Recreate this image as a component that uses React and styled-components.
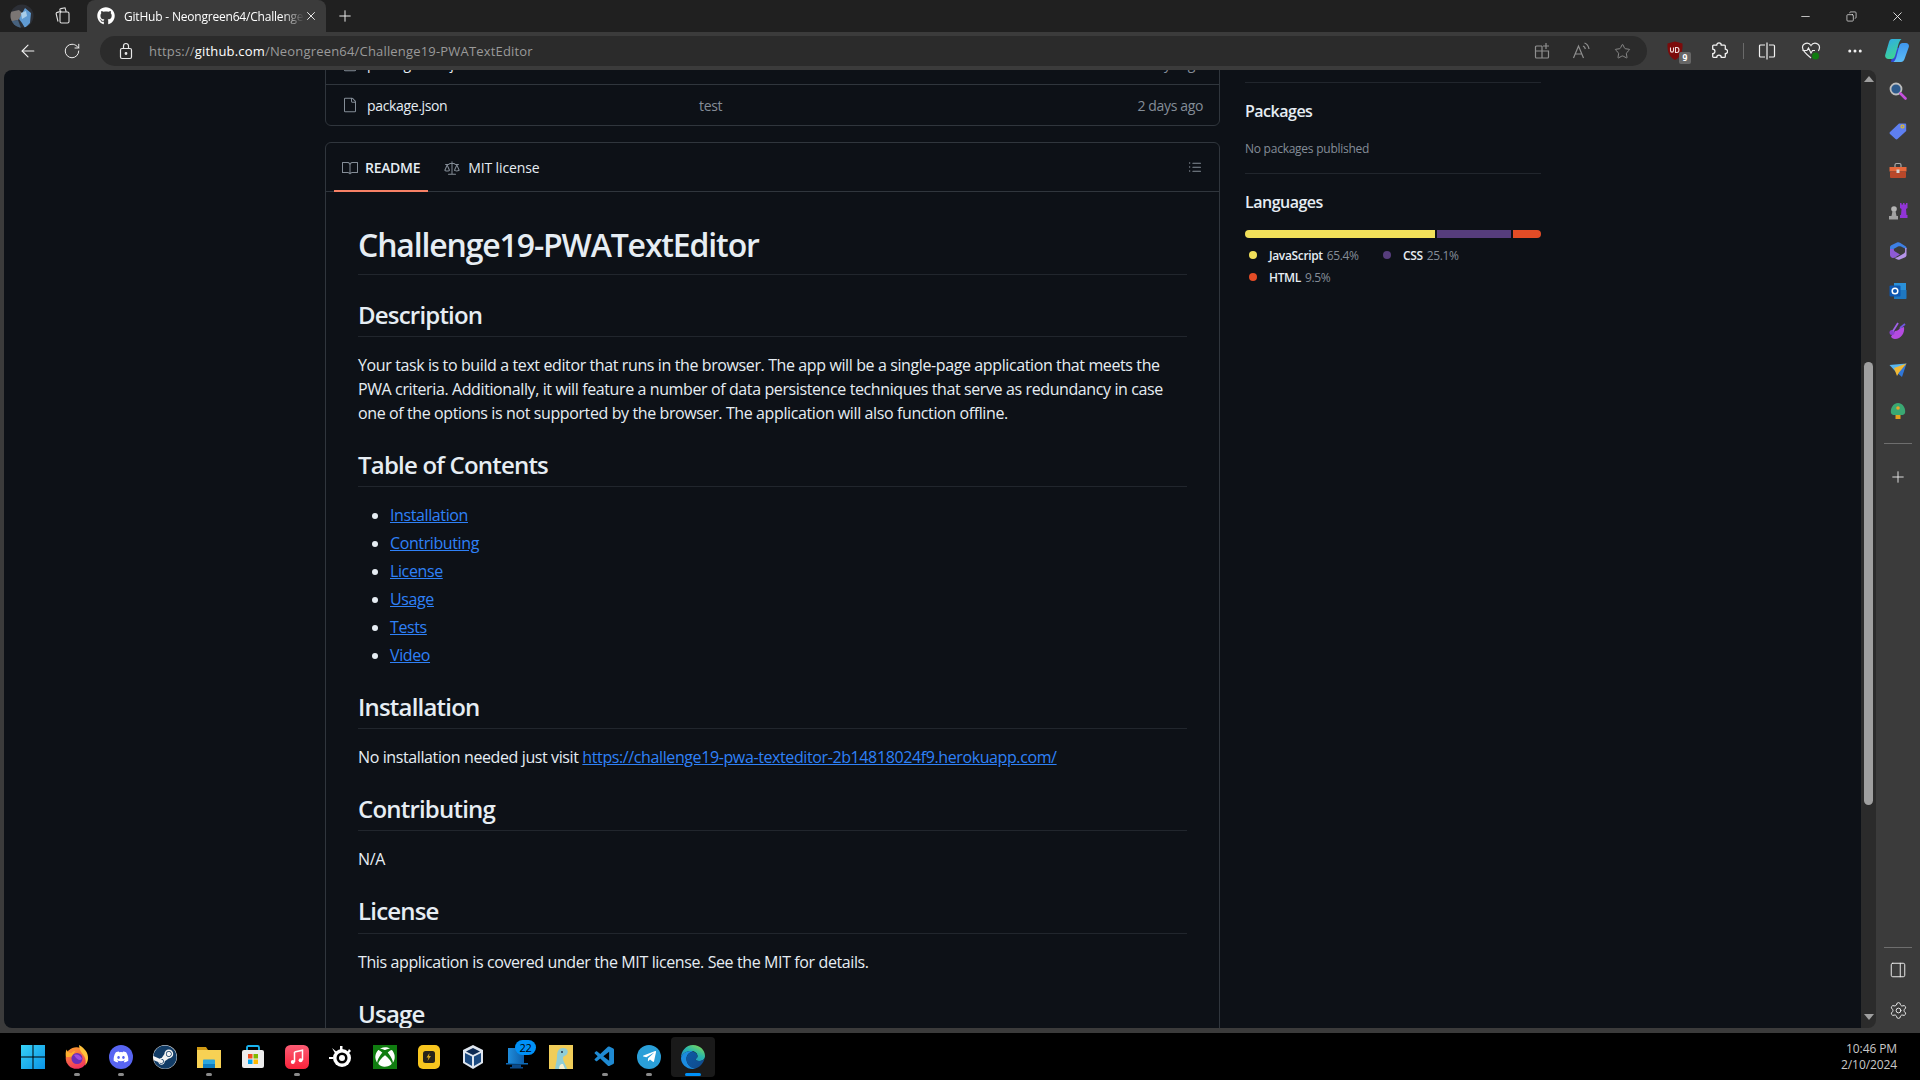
import React from "react";
import styled, { createGlobalStyle } from "styled-components";
import { ArrowLeft, RotateCw, Plus, X, Minus, Star, Ellipsis, Settings, PanelRight, Copy } from "lucide-react";
import { FaGithub, FaDiscord, FaSteam, FaTelegramPlane, FaXbox } from "react-icons/fa";
import { GoFile, GoBook, GoLaw, GoListUnordered } from "react-icons/go";
import { VscVscode } from "react-icons/vsc";

const GlobalStyle = createGlobalStyle`
  html, body { margin: 0; padding: 0; background: #000; }
  body { width: 1920px; height: 1080px; overflow: hidden; font-family: "Open Sans", "Noto Sans", sans-serif; }
  * { box-sizing: border-box; }
`;

const Shell = styled.div`
  width: 1920px;
  height: 1080px;
  display: flex;
  flex-direction: column;
  background: #000;
`;

/* browser chrome */
const TabStrip = styled.div`
  height: 32px;
  flex: none;
  display: flex;
  align-items: stretch;
  padding-left: 2px;
  background: #202020;
`;
const StripSlot = styled.div`
  width: ${p => p.$w || 40}px;
  display: flex;
  align-items: center;
  justify-content: center;
  color: #f0f0f0;
`;
const ActiveTab = styled.div`
  width: 239px;
  margin-left: 5px;
  display: flex;
  align-items: center;
  padding: 0 8px 0 10px;
  background: #3b3b3b;
  border-radius: 8px 8px 0 0;
  color: #fff;
`;
const TabTitle = styled.span`
  flex: 1;
  margin-left: 9px;
  font-size: 12px;
  letter-spacing: -0.2px;
  white-space: nowrap;
  overflow: hidden;
  -webkit-mask-image: linear-gradient(90deg, #000 88%, transparent);
  mask-image: linear-gradient(90deg, #000 88%, transparent);
`;
const WindowControls = styled.div`
  margin-left: auto;
  display: flex;
`;
const Toolbar = styled.div`
  height: 38px;
  flex: none;
  display: flex;
  align-items: center;
  padding-left: 6px;
  background: #3b3b3b;
`;
const ToolSlot = styled.div`
  position: relative;
  width: ${p => p.$w || 44}px;
  height: 30px;
  display: flex;
  align-items: center;
  justify-content: center;
  color: ${p => p.$muted ? "#8f8f8f" : "#f2f2f2"};
`;
const AddressBar = styled.div`
  width: 1547px;
  height: 30px;
  margin: 0 6px;
  display: flex;
  align-items: center;
  padding: 0 5px 0 18px;
  border-radius: 15px;
  background: #2b2b2b;
  color: #e8e8e8;
`;
const Url = styled.div`
  flex: 1;
  margin-left: 15px;
  font-size: 13px;
  letter-spacing: 0.18px;
  color: #9a9a9a;
  b { font-weight: 400; color: #fff; }
`;
const ToolDivider = styled.div`
  width: 1px;
  height: 16px;
  margin: 0 1px 0 2px;
  background: #6a6a6a;
`;
const CountBadge = styled.span`
  position: absolute;
  left: 26px;
  top: 16px;
  width: 12px;
  height: 12px;
  border-radius: 2px;
  background: #666;
  color: #fff;
  font: 700 9px/12px "DejaVu Sans Mono", monospace;
  text-align: center;
`;

/* middle row */
const Middle = styled.div`
  flex: 1;
  min-height: 0;
  display: flex;
  background: #3b3b3b;
  padding-bottom: 5px;
`;
const Page = styled.main`
  width: 1857px;
  margin-left: 4px;
  border-radius: 8px 0 0 8px;
  overflow: hidden;
  background: #0d1117;
  color: #e6edf3;
  display: grid;
  grid-template-columns: 895px 296px;
  column-gap: 25px;
  padding-left: 321px;
  align-content: start;
`;
const Scrollbar = styled.div`
  width: 15px;
  display: flex;
  flex-direction: column;
  align-items: center;
  background: #2b2b2b;
  border-radius: 0 8px 8px 0;
`;
const ScrollArrow = styled.div`
  width: 0;
  height: 0;
  margin: ${p => p.$down ? "auto 0 8px" : "6px 0 0"};
  border-left: 5px solid transparent;
  border-right: 5px solid transparent;
  ${p => p.$down ? "border-top: 6px solid #9f9f9f;" : "border-bottom: 6px solid #9f9f9f;"}
`;
const ScrollThumb = styled.div`
  width: 9px;
  height: 443px;
  margin-top: 280px;
  border-radius: 5px;
  background: #9f9f9f;
`;
const Rail = styled.aside`
  width: 44px;
  margin-bottom: -2px;
  display: flex;
  flex-direction: column;
  align-items: center;
  padding-top: 1px;
  color: #eee;
`;
const RailSlot = styled.div`
  width: 44px;
  height: 40px;
  flex: none;
  display: flex;
  align-items: center;
  justify-content: center;
`;
const RailLine = styled.div`
  width: 28px;
  height: 1px;
  flex: none;
  margin: ${p => p.$bottom ? "auto 0 2px" : "12px 0 13px"};
  background: #6e6e6e;
`;

/* github page */
const RepoColumn = styled.div`
  min-width: 0;
`;
const FileBox = styled.div`
  margin-top: -28px;
  border: 1px solid #30363d;
  border-radius: 6px;
`;
const FileRow = styled.div`
  height: 41px;
  display: grid;
  grid-template-columns: 357px 1fr auto;
  align-items: center;
  padding: 0 16px;
  font-size: 14px;
  letter-spacing: -0.35px;
  & + & { border-top: 1px solid #30363d; }
`;
const FileName = styled.div`
  display: flex;
  align-items: center;
  gap: 9px;
  svg { color: #848d97; }
`;
const Muted = styled.div`
  color: #848d97;
`;
const ReadmeBox = styled.section`
  margin-top: 16px;
  border: 1px solid #30363d;
  border-radius: 6px 6px 0 0;
`;
const ReadmeHead = styled.div`
  height: 49px;
  display: flex;
  align-items: stretch;
  padding: 0 16px 0 8px;
  border-bottom: 1px solid #30363d;
`;
const ReadmeTab = styled.div`
  display: flex;
  align-items: center;
  gap: ${p => p.$active ? 7 : 8}px;
  margin-bottom: -1px;
  padding: 2px 8px 0;
  margin-right: 8px;
  font-size: 14px;
  letter-spacing: ${p => p.$active ? -0.3 : -0.12}px;
  font-weight: ${p => p.$active ? 600 : 400};
  border-bottom: 2px solid ${p => p.$active ? "#f78166" : "transparent"};
  svg { color: #848d97; }
`;
const OutlineButton = styled.div`
  margin-left: auto;
  display: flex;
  align-items: center;
  color: #848d97;
`;
const Markdown = styled.article`
  padding: 32px 32px 0;
  height: 900px;
  font-size: 16px;
  line-height: 24px;
  letter-spacing: -0.39px;
`;
const H1 = styled.h1`
  margin: 0 0 16px;
  padding: 1px 0 8.6px;
  font-size: 32px;
  line-height: 40px;
  font-weight: 600;
  letter-spacing: -1.15px;
  border-bottom: 1px solid #21262d;
`;
const H2 = styled.h2`
  margin: 24px 0 16px;
  padding: 1px 0 6.2px;
  font-size: 24px;
  line-height: 30px;
  font-weight: 600;
  letter-spacing: -0.8px;
  border-bottom: 1px solid #21262d;
`;
const Para = styled.p`
  margin: 0 0 16px;
`;
const Toc = styled.ul`
  margin: 0 0 16px;
  padding-left: 32px;
  li + li { margin-top: 4px; }
`;
const A = styled.a`
  color: #2f81f7;
  text-decoration: underline;
`;

/* right column */
const SideColumn = styled.div`
  padding-top: 12px;
`;
const SideSection = styled.div`
  border-top: 1px solid #21262d;
  padding: 16px 0 0;
  height: ${p => p.$h ? `${p.$h}px` : "auto"};
`;
const SideTitle = styled.h2`
  margin: 0;
  font-size: 16px;
  line-height: 24px;
  font-weight: 600;
  letter-spacing: -0.5px;
`;
const SideNote = styled.div`
  margin-top: 17px;
  font-size: 12px;
  line-height: 18px;
  letter-spacing: -0.25px;
  color: #848d97;
`;
const LangBar = styled.div`
  display: flex;
  gap: 2px;
  height: 8px;
  margin-top: 16px;
  border-radius: 6px;
  overflow: hidden;
`;
const LangSegment = styled.span`
  background: ${p => p.$color};
`;
const LangList = styled.div`
  display: grid;
  grid-template-columns: 134px auto;
  justify-content: start;
  row-gap: 4px;
  margin-top: 8px;
  padding-left: 4px;
`;
const LangItem = styled.div`
  display: flex;
  align-items: center;
  height: 18px;
  font-size: 12px;
  letter-spacing: -0.35px;
  color: #848d97;
  b { font-weight: 600; color: #e6edf3; margin: 0 4px 0 12px; }
`;
const LangDot = styled.span`
  width: 8px;
  height: 8px;
  border-radius: 50%;
  background: ${p => p.$color};
`;

/* taskbar */
const Taskbar = styled.footer`
  height: 47px;
  flex: none;
  display: flex;
  align-items: center;
  padding-left: 11px;
  background: #000;
`;
const TaskItem = styled.div`
  position: relative;
  width: 44px;
  height: 40px;
  display: flex;
  align-items: center;
  justify-content: center;
  border-radius: 4px;
  ${p => p.$active && "background: #1a1a1a;"}
  &::after {
    content: "";
    display: ${p => p.$running ? "block" : "none"};
    position: absolute;
    bottom: 1px;
    left: 50%;
    width: ${p => p.$active ? 16 : 6}px;
    height: 3px;
    margin-left: ${p => p.$active ? -8 : -3}px;
    border-radius: 2px;
    background: ${p => p.$active ? "#0091f8" : "#8a8a8a"};
  }
`;
const TaskBadge = styled.span`
  position: absolute;
  top: 3px;
  right: 3px;
  width: 21px;
  height: 15px;
  border-radius: 8px;
  background: #0091f8;
  color: #000;
  font-size: 11px;
  line-height: 15px;
  letter-spacing: -0.2px;
  text-align: center;
`;
const Clock = styled.div`
  margin-left: auto;
  padding-right: 23px;
  text-align: right;
  font-size: 12px;
  line-height: 16px;
  letter-spacing: -0.1px;
  color: #c8c8c8;
`;
const IconDisc = styled.span`
  display: flex;
  width: 24px;
  height: 24px;
  align-items: center;
  justify-content: center;
  border-radius: ${p => p.$square ? "0" : "50%"};
  background: ${p => p.$bg};
  color: ${p => p.$fg || "#fff"};
`;

/* drawings */
const Avatar = () => (
  <svg width="24" height="24" viewBox="0 0 24 24">
    <clipPath id="avc"><circle cx="12" cy="12" r="11.500" /></clipPath>
    <g clipPath="url(#avc)">
      <rect width="24" height="24" fill="#2c2f36" />
      <path d="M0 8l9-2 4 4-5 6-8 2z" fill="#7b7674" />
      <path d="M9 15l6-11 6 5-1 10-5 5-3-5z" fill="#5f9ad2" />
      <path d="M11 9l5-2 1 5-5 3z" fill="#a8cdea" />
      <path d="M2 17l6-1 3 8H3z" fill="#47627e" />
    </g>
  </svg>
);
const Workspaces = () => (
  <svg width="18" height="18" viewBox="0 0 18 18" fill="none" stroke="#e0e0e0" strokeWidth="1.1">
    <rect x="7" y="5" width="9" height="11" rx="1.5" />
    <path d="M5 14.500L3.200 7c-.2-.8.2-1.400 1-1.600L8.500 4.200M7.500 5l-.6-2c-.2-.8.3-1.300 1-1.400L12 .8l1.200 4" />
  </svg>
);
const LockDot = () => (
  <svg width="16" height="18" viewBox="0 0 16 18" fill="none" stroke="currentColor" strokeWidth="1.200">
    <rect x="2.500" y="6.500" width="11" height="10" rx="1.500" />
    <path d="M5.500 6.500V4a2.500 2.500 0 0 1 5 0v2.500" />
    <circle cx="8" cy="11.500" r="0.800" fill="currentColor" />
  </svg>
);
const AppAvailable = () => (
  <svg width="18" height="18" viewBox="0 0 18 18" fill="none" stroke="currentColor" strokeWidth="1.2">
    <path d="M9 4H3.500c-.8 0-1 .4-1 1v10c0 .6.3 1 1 1h11c.7 0 1-.4 1-1V9H2.500M9 4v12M13 1v6M10 4h6" />
  </svg>
);
const ReadAloud = () => (
  <svg width="20" height="18" viewBox="0 0 20 18" fill="none" stroke="currentColor" strokeWidth="1.2">
    <path d="M1.500 16L6.500 4l5 12M3.500 12h6M11 4c1.300.6 2.100 1.700 2.400 3M12.500 1c2.600.9 4 3 4.500 6" />
  </svg>
);
const UBlock = () => (
  <svg width="18" height="20" viewBox="0 0 18 20">
    <path d="M9 .5l7.500 2c.4 8-1.500 13.500-7.500 16.500C3 16 1.100 10.500 1.500 2.500z" fill="#7c0b0b" />
    <path d="M4.500 6.500v3c0 2.200 3 2.200 3 0v-3M9.500 6.500h1.500c2.600 0 2.600 5 0 5H9.500z" fill="none" stroke="#f1dede" strokeWidth="1.100" />
  </svg>
);
const ExtensionPiece = () => (
  <svg width="18" height="18" viewBox="0 0 20 20" fill="none" stroke="currentColor" strokeWidth="1.400">
    <path d="M4 3.500h3.500a2.500 2.500 0 0 1 5 0H16a1 1 0 0 1 1 1V8a2.500 2.500 0 0 1 0 5v3a1 1 0 0 1-1 1h-3.500a2.500 2.500 0 0 0-5 0H4a1 1 0 0 1-1-1v-3a2.500 2.500 0 0 0 0-5V4.500a1 1 0 0 1 1-1z" />
  </svg>
);
const SplitScreen = () => (
  <svg width="18" height="18" viewBox="0 0 18 18" fill="none" stroke="currentColor" strokeWidth="1.200">
    <path d="M7 3H2.500a1 1 0 0 0-1 1v10a1 1 0 0 0 1 1H7M11 3h4.500a1 1 0 0 1 1 1v10a1 1 0 0 1-1 1H11M9 .5v17" />
  </svg>
);
const Health = () => (
  <svg width="20" height="20" viewBox="0 0 20 20" fill="none">
    <path d="M10 17C5 13 1.500 10 1.500 6.500 1.500 2 7.500.5 10 4.500 12.500.5 18.500 2 18.500 6.500c0 1.200-.4 2.300-1.100 3.400" stroke="#eee" strokeWidth="1.200" />
    <path d="M1.500 9.500H6l1.500-2.500 2.500 5 1.500-2.500H14" stroke="#eee" strokeWidth="1.100" />
    <circle cx="14.500" cy="15" r="3.500" fill="#107c10" />
  </svg>
);
const CopilotMark = () => (
  <svg width="24" height="24" viewBox="0 0 24 24">
    <defs>
      <linearGradient id="cpl" x1="0" y1="0" x2="0.5" y2="1"><stop offset="0" stopColor="#2fa8ee" /><stop offset="1" stopColor="#3dd68f" /></linearGradient>
      <linearGradient id="cpr" x1="0.5" y1="0" x2="0.5" y2="1"><stop offset="0" stopColor="#3f96ee" /><stop offset="1" stopColor="#5cbcf6" /></linearGradient>
    </defs>
    <path d="M6 23h8c1.500 0 3-1 3.500-3l2-9-7-2.500-5 6z" fill="#3448cf" />
    <path d="M7 0h9.500c-1.800 1.500-2.700 4-3.500 7L10 17c-.6 2-1.800 3-3.500 3h-3C1 20-.3 18 .2 16L4 3C4.600 1 5.500 0 7 0z" fill="url(#cpl)" />
    <path d="M16 23H8.500c1.800-1.500 2.700-4 3.400-7l2.300-9c.5-2 1.800-3 3.500-3h3.200c2.500 0 3.400 2 2.900 4L19.500 20c-.6 2-2 3-3.500 3z" fill="url(#cpr)" />
  </svg>
);
const SearchGlyph = () => (
  <svg width="18" height="18" viewBox="0 0 18 18" fill="none">
    <circle cx="7" cy="7" r="5.500" fill="#2d5a8c" stroke="#bdbdbd" strokeWidth="1.800" />
    <path d="M11.500 11.500l5 5" stroke="#c550dd" strokeWidth="2.600" strokeLinecap="round" />
  </svg>
);
const TagGlyph = () => (
  <svg width="18" height="18" viewBox="0 0 18 18">
    <path d="M1 10L10 1.500h6c.8 0 1.200.4 1.200 1.200v6.300L8.500 17c-.6.600-1.400.6-2 0L1 12c-.6-.6-.6-1.400 0-2z" fill="#5e7ff0" />
    <circle cx="13.500" cy="4.500" r="1.500" fill="none" stroke="#f2c014" strokeWidth="1.100" />
  </svg>
);
const BoxGlyph = () => (
  <svg width="18" height="18" viewBox="0 0 18 18">
    <path d="M6 5V3c0-1 .5-1.500 1.500-1.500h3C11.500 1.500 12 2 12 3v2" fill="none" stroke="#a9a9a9" strokeWidth="1.200" />
    <rect x="0.500" y="5" width="17" height="4.500" fill="#e8683b" />
    <rect x="1" y="9.500" width="16" height="6.500" rx="1" fill="#b9482a" />
    <rect x="7.500" y="7.500" width="3" height="3.500" fill="#d6d6d6" />
  </svg>
);
const ChessGlyph = () => (
  <svg width="20" height="20" viewBox="0 0 20 20">
    <path d="M12 2h1.500v1.500H15V2h1.500v1.500H18V2h1.500v5l-1.500 1 .5 6h1V17h-7.500v-3h1l.5-6L12 7z" fill="#9135d6" />
    <circle cx="6" cy="8" r="2.800" fill="#b4b4b4" />
    <path d="M4.500 10h3l1 5h1.500v3.500H1V15h2.500z" fill="#a2a2a2" />
  </svg>
);
const LoopGlyph = () => (
  <svg width="18" height="18" viewBox="0 0 18 18">
    <path d="M8 .5c1.200-.5 2.200-.3 3 .2l5.500 3.500c.7.500 1 1 1 2v1L12 4.500c-1-.5-2-.5-3 0L1 9V5.500C1 4.500 1.400 3.800 2.300 3.300z" fill="#3d7fe4" />
    <path d="M1 7v6c0 1 .4 1.700 1.200 2.200L3 15.700c1 .5 2 .3 3-.2l5-3-5-3c-1-.6-1.200-1.500-1.200-2.500z" fill="#8e5ad6" />
    <path d="M17.500 6v7c0 1-.4 1.700-1.300 2.200l-5.400 2.300c-1 .4-2 .3-3-.2L5 15.500c1.500.5 2.600.2 3.800-.5l6-3.500c1-.6 1.300-1.500 1.300-2.500V6z" fill="#b594e8" />
  </svg>
);
const OutlookGlyph = () => (
  <svg width="18" height="18" viewBox="0 0 18 18">
    <path d="M5 1h12v9H5z" fill="#2a90d8" />
    <path d="M5 8h12.500v8c0 .6-.4 1-1 1H5z" fill="#1f78c1" />
    <rect x="0.500" y="3.500" width="11" height="11" rx="1" fill="#0e57b0" />
    <circle cx="6" cy="9" r="2.800" fill="none" stroke="#fff" strokeWidth="1.500" />
  </svg>
);
const HarpGlyph = () => (
  <svg width="18" height="18" viewBox="0 0 18 18">
    <path d="M6 9c2 0 4-1 5-3l4-1c1 6-3 12-9 12-2 0-3.500-1-4-2.500z" fill="#b44be0" />
    <circle cx="3" cy="10.500" r="2.500" fill="#8a3ed0" />
    <path d="M4 9l5-8" stroke="#a061e8" strokeWidth="1.800" />
    <path d="M11 6l5-4" stroke="#7056e0" strokeWidth="1.800" />
  </svg>
);
const PlaneGlyph = () => (
  <svg width="18" height="16" viewBox="0 0 18 16">
    <path d="M.5 2L17.500.5 7 9z" fill="#58b6f0" />
    <path d="M17.500.5L13 14 7 9z" fill="#3076d8" />
    <path d="M17.500.5L5 5l3 8 2-3.500z" fill="#f0b834" />
  </svg>
);
const TreeGlyph = () => (
  <svg width="16" height="18" viewBox="0 0 16 18">
    <path d="M1 11c-1-4 2-10 7-10s8 6 7 10c-.5 1.500-2 2-3 2H4c-1 0-2.500-.5-3-2z" fill="#3aa873" />
    <rect x="5.500" y="13" width="5" height="4" fill="#e3a11e" />
    <circle cx="8" cy="6" r="1.800" fill="#eda32a" />
  </svg>
);

const WinLogo = () => (
  <svg width="24" height="24" viewBox="0 0 24 24">
    <defs><linearGradient id="win" x1="0" y1="0" x2="1" y2="1"><stop offset="0" stopColor="#37d2f6" /><stop offset="1" stopColor="#0a93e6" /></linearGradient></defs>
    <path d="M0 0h11.500v11.500H0zM12.500 0H24v11.500H12.500zM0 12.500h11.500V24H0zM12.500 12.500H24V24H12.500z" fill="url(#win)" />
  </svg>
);
const Firefox = () => (
  <svg width="24" height="24" viewBox="0 0 24 24">
    <defs><linearGradient id="ffx" x1="0.2" y1="0" x2="0.5" y2="1"><stop offset="0" stopColor="#ff9d2e" /><stop offset="1" stopColor="#f0325f" /></linearGradient></defs>
    <circle cx="11.500" cy="13" r="10.800" fill="url(#ffx)" />
    <path d="M14 0c6 3.500 9.500 8 9 14-.3 3-1.500 5-3 6.500 1.500-4 .5-8-2-11-1.500-2-3.500-4-4-9.500z" fill="#ffc23a" />
    <path d="M1.500 4.500C2.500 7 4 8 6.500 8c1-1.500 2.500-2 4-2-1.500 1.500-2 3-2 5-2.500 1-5 1-7.500 1-.5-2.500-.5-5 .5-7.500z" fill="#ffb02e" />
    <circle cx="12" cy="13.500" r="5.500" fill="#6b2fb8" />
    <path d="M9 10c3-1.500 7 .5 8 4-2 2-5 1-8-4z" fill="#a14ce0" />
  </svg>
);
const Discord = () => <IconDisc $bg="#5865f2"><FaDiscord size={16} /></IconDisc>;
const Steam = () => <IconDisc $bg="#f4f4f4" $fg="#123c66"><FaSteam size={24} /></IconDisc>;
const Folder = () => (
  <svg width="24" height="24" viewBox="0 0 24 24">
    <path d="M0 2h9l2 3H24v4H0z" fill="#d19a14" />
    <path d="M0 5h24v18H0z" fill="#f7d154" />
    <path d="M6 17h12v6H6z" fill="#0e7cc0" />
    <path d="M6 15.500c0-.5.400-1 1-1h10c.6 0 1 .5 1 1V19H6z" fill="#2aa5dc" />
  </svg>
);
const Store = () => (
  <svg width="24" height="24" viewBox="0 0 24 24">
    <path d="M6 6V2.500C6 1.500 6.500 1 7.500 1h9c1 0 1.500.5 1.500 1.500V6" fill="none" stroke="#19b4f0" strokeWidth="1.800" />
    <rect x="1" y="5" width="22" height="18" rx="2" fill="#ededed" />
    <path d="M7 9h4.500v4.500H7z" fill="#f25022" /><path d="M12.500 9H17v4.500h-4.500z" fill="#7fba00" />
    <path d="M7 14.500h4.500V19H7z" fill="#00a4ef" /><path d="M12.500 14.500H17V19h-4.500z" fill="#ffb900" />
  </svg>
);
const Music = () => (
  <svg width="24" height="24" viewBox="0 0 24 24">
    <defs><linearGradient id="am" x1="0" y1="0" x2="0" y2="1"><stop offset="0" stopColor="#fb5c74" /><stop offset="1" stopColor="#fa233b" /></linearGradient></defs>
    <rect width="24" height="24" rx="5.500" fill="url(#am)" />
    <path d="M9.500 7l8-1.700V15M9.500 7v10" fill="none" stroke="#fff" strokeWidth="1.500" />
    <circle cx="7.800" cy="17" r="2" fill="#fff" /><circle cx="15.600" cy="15.200" r="2" fill="#fff" />
  </svg>
);
const SteelSeries = () => (
  <svg width="24" height="24" viewBox="0 0 24 24">
    <circle cx="13" cy="13" r="9" fill="#fff" />
    <circle cx="13" cy="13" r="5.500" fill="#000" />
    <circle cx="13" cy="13" r="3" fill="#fff" />
    <path d="M3 3l6 5-2 2zM11 1h2.500v4H11zM20 4l2 2-3 3-1-1zM0 12h4v2H0z" fill="#fff" />
  </svg>
);
const Xbox = () => <IconDisc $bg="#107c10" $square><FaXbox size={20} /></IconDisc>;
const Nord = () => (
  <svg width="24" height="24" viewBox="0 0 24 24">
    <rect x="1" width="22" height="24" rx="5" fill="#f7c51e" />
    <rect x="6" y="6" width="12" height="12" rx="2.500" fill="#26221a" />
    <path d="M12.500 8l-3 4.500h2l-1 3.500 3.500-5h-2z" fill="#d8a71a" />
  </svg>
);
const VirtualBox = () => (
  <svg width="24" height="24" viewBox="0 0 24 24">
    <path d="M12 0l10 5v13l-10 6-10-6V5z" fill="#dfe6ef" />
    <path d="M12 3l7 3.500-7 3.500-7-3.500z" fill="#0e2a52" />
    <path d="M4 8l7 3.500V21l-7-4zM20 8l-7 3.500V21l7-4z" fill="#1c4a80" />
  </svg>
);
const DesktopApp = () => (
  <svg width="24" height="24" viewBox="0 0 24 24">
    <defs><linearGradient id="dsk" x1="0" y1="0" x2="1" y2="0"><stop offset="0" stopColor="#1f8ddc" /><stop offset="1" stopColor="#0d5da8" /></linearGradient></defs>
    <path d="M3 3h16v16H3z" fill="url(#dsk)" />
    <path d="M1 18h22v1.500H1z" fill="#0e6bb8" />
    <path d="M7 19.500h9V22H7zM5 22h13v1.500H5z" fill="#0b4a8a" />
  </svg>
);
const Mascot = () => (
  <svg width="24" height="24" viewBox="0 0 24 24">
    <rect width="24" height="24" fill="#f0cd59" />
    <path d="M6 24c1-6 2-9 2-13C8 6 10 3 14 3s6 3 4 6c-1 2-4 2-4 4 0 4 3 6 4 11z" fill="#8fcdd6" />
    <path d="M10 24c.5-5 2-5 4-5l2 5z" fill="#f7efcf" />
    <circle cx="13" cy="7" r="1" fill="#234" />
  </svg>
);
const Edge = () => (
  <svg width="24" height="24" viewBox="0 0 24 24">
    <defs>
      <linearGradient id="edg" x1="0.8" y1="0" x2="0.1" y2="0.9"><stop offset="0" stopColor="#7ed957" /><stop offset="0.45" stopColor="#2bb8a8" /><stop offset="1" stopColor="#1a86dd" /></linearGradient>
      <linearGradient id="edb" x1="0" y1="0" x2="1" y2="1"><stop offset="0" stopColor="#0c59a4" /><stop offset="1" stopColor="#114a8b" /></linearGradient>
    </defs>
    <path d="M12 0c7 0 12 5 12 11 0 3-2.500 5-6 5-2.500 0-3.500-1-3.500-1.500 0-1 2-1 2-3.500 0-3-3-5-6.500-5C5 6 1 9 0 13 0 6 5 0 12 0z" fill="url(#edg)" />
    <path d="M0 13c1-4 5-7 9-7 1.500 0 2.500.3 3.500.8C8 7 5.500 10 5.500 14c0 5 4 9 9.500 9.500-1 .3-2 .5-3 .5C5 24 0 19 0 13z" fill="#1b8ce0" />
    <path d="M5.500 14c0-4 2.500-7 7-7.200 2.400.8 4 2.600 4 4.200 0 2.500-2 2.500-2 3.500 0 .5 1 1.500 3.500 1.500 2.500 0 4.500-1 5.500-2.500-1 5-5 9-9.500 10-5.500-.5-8.500-5-8.500-9.500z" fill="url(#edb)" />
  </svg>
);

const taskItems = [
  { node: <WinLogo /> },
  { node: <Firefox />, running: true },
  { node: <Discord />, running: true },
  { node: <Steam /> },
  { node: <Folder />, running: true },
  { node: <Store /> },
  { node: <Music />, running: true },
  { node: <SteelSeries /> },
  { node: <Xbox /> },
  { node: <Nord /> },
  { node: <VirtualBox /> },
  { node: <DesktopApp />, badge: "22" },
  { node: <Mascot /> },
  { node: <VscVscode size={24} color="#1f8ad2" />, running: true },
  { node: <IconDisc $bg="#2a9fd8"><FaTelegramPlane size={15} /></IconDisc>, running: true },
  { node: <Edge />, running: true, active: true },
];

const railItems = [<SearchGlyph />, <TagGlyph />, <BoxGlyph />, <ChessGlyph />, <LoopGlyph />, <OutlookGlyph />, <HarpGlyph />, <PlaneGlyph />, <TreeGlyph />];
const tocItems = ["Installation", "Contributing", "License", "Usage", "Tests", "Video"];
const languages = [
  { name: "JavaScript", pct: "65.4%", color: "#f1e05a", share: 190 },
  { name: "CSS", pct: "25.1%", color: "#563d7c", share: 74 },
  { name: "HTML", pct: "9.5%", color: "#e34c26", share: 28 },
];

export default function App() {
  return (
    <Shell>
      <GlobalStyle />
      <TabStrip>
        <StripSlot><Avatar /></StripSlot>
        <StripSlot><Workspaces /></StripSlot>
        <ActiveTab>
          <FaGithub size={18} />
          <TabTitle>GitHub - Neongreen64/Challenge19-PWATextEditor</TabTitle>
          <X size={14} strokeWidth={1.5} />
        </ActiveTab>
        <StripSlot $w={38}><Plus size={18} strokeWidth={1.3} /></StripSlot>
        <WindowControls>
          <StripSlot $w={46}><Minus size={13} strokeWidth={1.4} /></StripSlot>
          <StripSlot $w={46}><Copy size={11} strokeWidth={1.5} style={{ transform: "scaleX(-1)" }} /></StripSlot>
          <StripSlot $w={46}><X size={15} strokeWidth={1.4} /></StripSlot>
        </WindowControls>
      </TabStrip>

      <Toolbar>
        <ToolSlot><ArrowLeft size={20} strokeWidth={1.3} /></ToolSlot>
        <ToolSlot><RotateCw size={18} strokeWidth={1.3} /></ToolSlot>
        <AddressBar>
          <LockDot />
          <Url>https://<b>github.com</b>/Neongreen64/Challenge19-PWATextEditor</Url>
          <ToolSlot $w={40} $muted><AppAvailable /></ToolSlot>
          <ToolSlot $w={40} $muted><ReadAloud /></ToolSlot>
          <ToolSlot $w={40} $muted><Star size={17} strokeWidth={1.3} /></ToolSlot>
        </AddressBar>
        <ToolSlot><UBlock /><CountBadge>9</CountBadge></ToolSlot>
        <ToolSlot><ExtensionPiece /></ToolSlot>
        <ToolDivider />
        <ToolSlot><SplitScreen /></ToolSlot>
        <ToolSlot><Health /></ToolSlot>
        <ToolSlot><Ellipsis size={18} strokeWidth={2} /></ToolSlot>
        <ToolSlot $w={40}><CopilotMark /></ToolSlot>
      </Toolbar>

      <Middle>
        <Page>
          <RepoColumn>
            <FileBox>
              <FileRow>
                <FileName><GoFile size={16} />package-lock.json</FileName>
                <Muted>test</Muted>
                <Muted>2 days ago</Muted>
              </FileRow>
              <FileRow>
                <FileName><GoFile size={16} />package.json</FileName>
                <Muted>test</Muted>
                <Muted>2 days ago</Muted>
              </FileRow>
            </FileBox>
            <ReadmeBox>
              <ReadmeHead>
                <ReadmeTab $active><GoBook size={16} />README</ReadmeTab>
                <ReadmeTab><GoLaw size={16} />MIT license</ReadmeTab>
                <OutlineButton><GoListUnordered size={16} /></OutlineButton>
              </ReadmeHead>
              <Markdown>
                <H1>Challenge19-PWATextEditor</H1>
                <H2>Description</H2>
                <Para>Your task is to build a text editor that runs in the browser. The app will be a single-page application that meets the PWA criteria. Additionally, it will feature a number of data persistence techniques that serve as redundancy in case one of the options is not supported by the browser. The application will also function offline.</Para>
                <H2>Table of Contents</H2>
                <Toc>
                  {tocItems.map(item => <li key={item}><A href="#">{item}</A></li>)}
                </Toc>
                <H2>Installation</H2>
                <Para>No installation needed just visit <A href="#">https://challenge19-pwa-texteditor-2b14818024f9.herokuapp.com/</A></Para>
                <H2>Contributing</H2>
                <Para>N/A</Para>
                <H2>License</H2>
                <Para>This application is covered under the MIT license. See the MIT for details.</Para>
                <H2>Usage</H2>
              </Markdown>
            </ReadmeBox>
          </RepoColumn>
          <SideColumn>
            <SideSection $h={91}>
              <SideTitle>Packages</SideTitle>
              <SideNote>No packages published</SideNote>
            </SideSection>
            <SideSection>
              <SideTitle>Languages</SideTitle>
              <LangBar>
                {languages.map(l => <LangSegment key={l.name} $color={l.color} style={{ width: l.share }} />)}
              </LangBar>
              <LangList>
                {languages.map(l => (
                  <LangItem key={l.name}><LangDot $color={l.color} /><b>{l.name}</b>{l.pct}</LangItem>
                ))}
              </LangList>
            </SideSection>
          </SideColumn>
        </Page>
        <Scrollbar>
          <ScrollArrow />
          <ScrollThumb />
          <ScrollArrow $down />
        </Scrollbar>
        <Rail>
          {railItems.map((icon, i) => <RailSlot key={i}>{icon}</RailSlot>)}
          <RailLine />
          <RailSlot><Plus size={18} strokeWidth={1.2} /></RailSlot>
          <RailLine $bottom />
          <RailSlot><PanelRight size={18} strokeWidth={1.3} /></RailSlot>
          <RailSlot><Settings size={19} strokeWidth={1.2} /></RailSlot>
        </Rail>
      </Middle>

      <Taskbar>
        {taskItems.map((t, i) => (
          <TaskItem key={i} $running={t.running} $active={t.active}>
            {t.node}
            {t.badge && <TaskBadge>{t.badge}</TaskBadge>}
          </TaskItem>
        ))}
        <Clock>10:46 PM<br />2/10/2024</Clock>
      </Taskbar>
    </Shell>
  );
}
